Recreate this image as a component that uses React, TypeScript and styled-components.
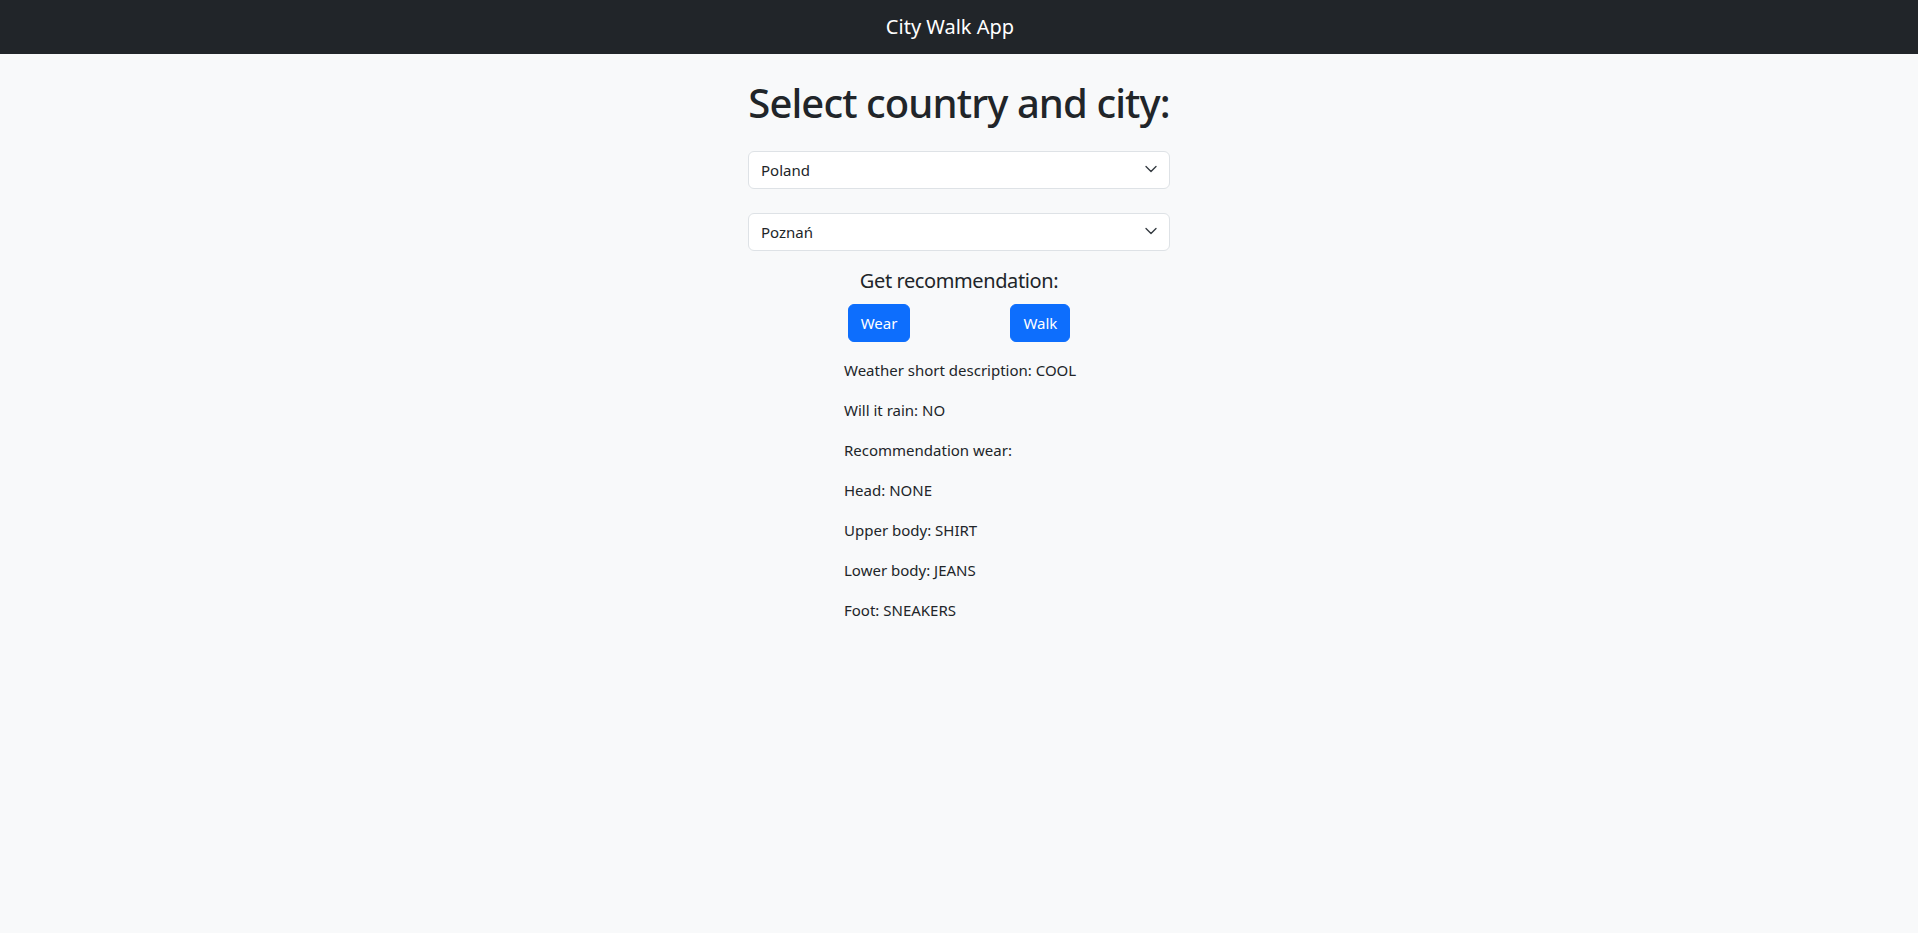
import * as React from 'react';
import styled, { createGlobalStyle } from 'styled-components'

const GlobalStyle = createGlobalStyle`
  body {
    margin: 0;
    background-color: #f8f9fa;
    color: #212529;
    font-family: "Noto Sans", "Open Sans", sans-serif;
    font-size: 16px;
  }
`

const Navbar = styled.nav`
  height: 54px;
  background-color: #212529;
  display: flex;
  align-items: center;
  justify-content: center;
  padding-right: 18px;
`

const Brand = styled.span`
  color: #fff;
  font-size: 20px;
  line-height: 30px;
`

const Main = styled.main`
  width: 422px;
  margin: 0 auto;
  display: flex;
  flex-direction: column;
  align-items: stretch;
`

const Title = styled.h1`
  margin: 25px -20px 24px;
  font-size: 40px;
  font-weight: 500;
  line-height: 48px;
  letter-spacing: -0.9px;
  text-align: center;
  white-space: nowrap;
`

const SelectWrapper = styled.div`
  position: relative;
  margin-bottom: 24px;
`

const StyledSelect = styled.select`
  width: 100%;
  height: 38px;
  appearance: none;
  background-color: #fff;
  color: #212529;
  border: 1px solid #dee2e6;
  border-radius: 6px;
  padding: 6px 36px 6px 12px;
  font-family: inherit;
  font-size: 15px;
  outline: none;
`

const Chevron = styled.svg`
  position: absolute;
  right: 12px;
  top: 13px;
  pointer-events: none;
`

const SubTitle = styled.h5`
  margin: -6px 0 11px;
  font-size: 20px;
  font-weight: 400;
  line-height: 24px;
  letter-spacing: -0.4px;
  text-align: center;
`

const ButtonRow = styled.div`
  display: flex;
  justify-content: center;
  gap: 100px;
  margin-bottom: 16px;
`

const Button = styled.button`
  height: 38px;
  padding: 6px 12px;
  background-color: #0d6efd;
  color: #fff;
  border: 1px solid #0d6efd;
  border-radius: 6px;
  font-family: inherit;
  font-size: 15px;
  line-height: 24px;
  cursor: pointer;
`

const Results = styled.div`
  align-self: center;
  width: 230px;
`

const Line = styled.p`
  margin: 0 0 16px;
  font-size: 15px;
  line-height: 24px;
  white-space: nowrap;
`

const Select = ({ value, options }: any) => (
  <SelectWrapper>
    <StyledSelect defaultValue={value}>
      {options.map((opt: string) => (
        <option key={opt} value={opt}>{opt}</option>
      ))}
    </StyledSelect>
    <Chevron width="14" height="10" viewBox="0 0 16 12">
      <path d="m2 3 6 6 6-6" fill="none" stroke="#343a40" strokeWidth="1.6" strokeLinecap="round" strokeLinejoin="round" />
    </Chevron>
  </SelectWrapper>
)

const results = [
  'Weather short description: COOL',
  'Will it rain: NO',
  'Recommendation wear:',
  'Head: NONE',
  'Upper body: SHIRT',
  'Lower body: JEANS',
  'Foot: SNEAKERS',
]

export default function App() {
  return (
    <>
      <GlobalStyle />
      <Navbar>
        <Brand>City Walk App</Brand>
      </Navbar>
      <Main>
        <Title>Select country and city:</Title>
        <Select value="Poland" options={['Poland', 'Germany', 'France']} />
        <Select value="Poznań" options={['Poznań', 'Warszawa', 'Kraków']} />
        <SubTitle>Get recommendation:</SubTitle>
        <ButtonRow>
          <Button>Wear</Button>
          <Button>Walk</Button>
        </ButtonRow>
        <Results>
          {results.map((r) => (
            <Line key={r}>{r}</Line>
          ))}
        </Results>
      </Main>
    </>
  )
}
